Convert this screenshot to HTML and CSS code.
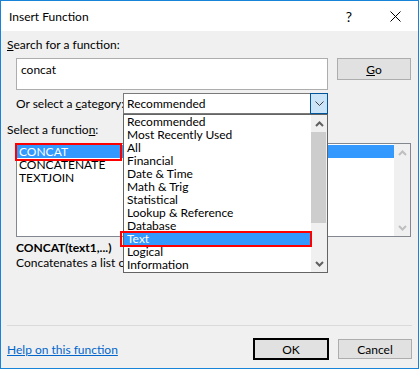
FILE: index.html
```html
<!DOCTYPE html>
<html lang="en">
<head>
    <meta charset="UTF-8">
    <meta name="viewport" content="width=device-width, initial-scale=1.0">
    <title>Insert Function</title>
    <link rel="stylesheet" href="styles.css">
</head>
<body>

    <div class="dialog">
        <!-- Title bar -->
        <div class="titlebar">
            <span class="title">Insert Function</span>
            <span class="help">?</span>
            <svg class="close" width="11" height="11" viewBox="0 0 11 11">
                <path d="M0.5 0.5 L10.5 10.5 M10.5 0.5 L0.5 10.5" stroke="#000" stroke-width="1" fill="none"/>
            </svg>
        </div>

        <div class="content">
            <div class="label"><u>S</u>earch for a function:</div>
            <div class="search-row">
                <div class="search-box">concat</div>
                <button class="btn go"><u>G</u>o</button>
            </div>

            <div class="category-row">
                <span class="category-label">Or select a <u>c</u>ategory:</span>
                <div class="combo">
                    <span class="combo-value">Recommended</span>
                    <span class="combo-btn">
                        <svg width="9" height="5" viewBox="0 0 9 5">
                            <polyline points="0.5,0.5 4.5,4.5 8.5,0.5" stroke="#404040" stroke-width="1" fill="none"/>
                        </svg>
                    </span>

                    <!-- Open category dropdown -->
                    <div class="dropdown">
                        <ul class="options">
                            <li>Recommended</li>
                            <li>Most Recently Used</li>
                            <li>All</li>
                            <li>Financial</li>
                            <li>Date &amp; Time</li>
                            <li>Math &amp; Trig</li>
                            <li>Statistical</li>
                            <li>Lookup &amp; Reference</li>
                            <li>Database</li>
                            <li class="selected marked marked-text">Text</li>
                            <li>Logical</li>
                            <li>Information</li>
                        </ul>
                        <div class="scrollbar">
                            <span class="arrow">
                                <svg width="9" height="6" viewBox="0 0 9 6">
                                    <polyline points="1,5 4.5,1.5 8,5" stroke="#606060" stroke-width="2" fill="none"/>
                                </svg>
                            </span>
                            <span class="thumb"></span>
                            <span class="track"></span>
                            <span class="arrow">
                                <svg width="9" height="6" viewBox="0 0 9 6">
                                    <polyline points="1,1 4.5,4.5 8,1" stroke="#606060" stroke-width="2" fill="none"/>
                                </svg>
                            </span>
                        </div>
                    </div>
                </div>
            </div>

            <div class="label label-fn">Select a functio<u>n</u>:</div>
            <div class="listbox">
                <ul class="functions">
                    <li class="selected marked marked-fn">CONCAT</li>
                    <li>CONCATENATE</li>
                    <li>TEXTJOIN</li>
                </ul>
                <div class="scrollbar disabled">
                    <span class="arrow">
                        <svg width="9" height="6" viewBox="0 0 9 6">
                            <polyline points="1,5 4.5,1.5 8,5" stroke="#bfbfbf" stroke-width="2" fill="none"/>
                        </svg>
                    </span>
                    <span class="track"></span>
                    <span class="arrow">
                        <svg width="9" height="6" viewBox="0 0 9 6">
                            <polyline points="1,1 4.5,4.5 8,1" stroke="#bfbfbf" stroke-width="2" fill="none"/>
                        </svg>
                    </span>
                </div>
            </div>

            <div class="signature">CONCAT(text1,...)</div>
            <!-- the rest of this line is hidden behind the open dropdown -->
            <div class="description">Concatenates a list or range of text strings.</div>
        </div>

        <div class="footer">
            <div class="separator"></div>
            <div class="actions">
                <a href="#" class="help-link">Help on this function</a>
                <button class="btn ok">OK</button>
                <button class="btn cancel">Cancel</button>
            </div>
        </div>
    </div>

</body>
</html>
```

FILE: styles.css
```css
* {
    margin: 0;
    padding: 0;
    box-sizing: border-box;
}

body {
    font-family: 'Lato', 'Liberation Sans', sans-serif;
    font-size: 12px;
    color: #000;
    background-color: #f0f0f0;
}

.dialog {
    width: 419px;
    height: 369px;
    border: 1px solid #1883d7;
    background-color: #f0f0f0;
    display: flex;
    flex-direction: column;
}

/* Title bar */
.titlebar {
    height: 30px;
    background-color: white;
    display: flex;
    align-items: center;
    padding-left: 8px;
}

.title {
    font-size: 12px;
    flex: 1;
}

.help {
    font-size: 14px;
    margin-right: 38px;
}

.close {
    margin-right: 17px;
}

/* Main area */
.content {
    padding: 6px 6px 0;
}

.label {
    line-height: 16px;
}

.label-fn {
    margin-top: 8px;
}

.search-row {
    display: flex;
    margin-top: 5px;
    margin-left: 9px;
    height: 32px;
}

.search-box {
    width: 312px;
    height: 32px;
    background-color: white;
    border: 1px solid #adadad;
    padding: 3px 4px;
    line-height: 15px;
}

.btn {
    font-family: inherit;
    font-size: 12px;
    color: #000;
    background-color: #e1e1e1;
    border: 1px solid #adadad;
    height: 20px;
    width: 74px;
}

.go {
    margin-left: 9px;
    height: 22px;
}

.category-row {
    display: flex;
    align-items: center;
    margin-top: 3px;
    margin-left: 9px;
    height: 21px;
}

.category-label {
    width: 107px;
    flex-shrink: 0;
    white-space: nowrap;
}

.combo {
    position: relative;
    width: 205px;
    height: 21px;
    background-color: white;
    border: 1px solid #7a7a7a;
    display: flex;
    align-items: center;
    padding-left: 3px;
}

.combo-value {
    flex: 1;
}

.combo-btn {
    width: 18px;
    height: 21px;
    margin: -1px -1px -1px 0;
    align-self: flex-start;
    background-color: #cce4f7;
    border: 1px solid #005499;
    display: flex;
    align-items: center;
    justify-content: center;
}

/* Dropdown list of categories, drawn over the dialog */
.dropdown {
    position: absolute;
    left: -1px;
    top: 20px;
    width: 205px;
    height: 159px;
    background-color: white;
    border: 1px solid #646464;
    display: flex;
    z-index: 5;
}

.options {
    list-style: none;
    flex: 1;
}

.options li,
.functions li {
    position: relative;
    height: 13px;
    line-height: 13px;
    padding-left: 3px;
    white-space: nowrap;
}

.functions li {
    padding-left: 2px;
}

li.selected {
    background-color: #3399ff;
    color: white;
}

/* red annotation boxes */
li.marked::after {
    content: "";
    position: absolute;
    box-sizing: border-box;
    border: 2px solid #ff0000;
}

li.marked-fn::after {
    left: -2px;
    top: -2px;
    width: 107px;
    height: 18px;
}

li.marked-text::after {
    left: -4px;
    top: -1px;
    width: 192px;
    height: 16px;
}

.scrollbar {
    width: 16px;
    background-color: #f0f0f0;
    display: flex;
    flex-direction: column;
}

.scrollbar .arrow {
    height: 17px;
    display: flex;
    align-items: center;
    justify-content: center;
}

.scrollbar .thumb {
    height: 91px;
    background-color: #cdcdcd;
    margin: 0 1px 0 0;
}

.scrollbar .track {
    flex: 1;
}

.listbox {
    margin-top: 5px;
    margin-left: 9px;
    width: 395px;
    height: 94px;
    background-color: white;
    border: 1px solid #828790;
    display: flex;
}

.functions {
    list-style: none;
    flex: 1;
    padding-top: 1px;
}

.signature {
    margin-top: 3px;
    margin-left: 9px;
    font-weight: bold;
    line-height: 15px;
}

.description {
    margin-left: 9px;
    width: 107px;
    overflow: hidden;
    white-space: nowrap;
    line-height: 15px;
}

/* Footer */
.footer {
    margin-top: auto;
    padding: 0 6px 8px;
}

.separator {
    height: 1px;
    background-color: #dadada;
}

.actions {
    display: flex;
    align-items: center;
    margin-top: 12px;
    height: 22px;
}

.help-link {
    color: #0066cc;
    flex: 1;
}

.ok {
    width: 76px;
    height: 22px;
    border: 2px solid #000;
}

.cancel {
    margin-left: 9px;
}
```
